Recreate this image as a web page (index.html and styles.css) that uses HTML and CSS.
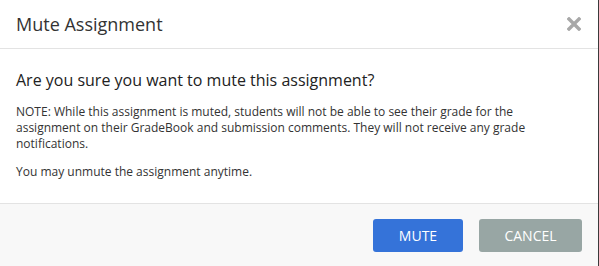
FILE: index.html
```html
<!DOCTYPE html>
<html lang="en">
<head>
    <meta charset="UTF-8">
    <title>Mute Assignment</title>
    <link rel="stylesheet" href="styles.css">
</head>
<body>

<div class="modal">
    <header class="modal-header">
        <h1>Mute Assignment</h1>
        <button class="close" aria-label="Close">
            <svg width="14" height="14" viewBox="0 0 14 14"><path d="M2 2 L12 12 M12 2 L2 12" stroke="#a8a8a8" stroke-width="3.4" stroke-linecap="square"/></svg>
        </button>
    </header>

    <section class="modal-body">
        <h2>Are you sure you want to mute this assignment?</h2>
        <p>NOTE: While this assignment is muted, students will not be able to see their grade for the assignment on their GradeBook and submission comments. They will not receive any grade notifications.</p>
        <p>You may unmute the assignment anytime.</p>
    </section>

    <footer class="modal-footer">
        <button class="btn btn-primary">MUTE</button>
        <button class="btn btn-secondary">CANCEL</button>
    </footer>
</div>

</body>
</html>
```

FILE: styles.css
```css
body {
    margin: 0;
    padding: 0;
    background: #3a3a3a;
    font-family: 'Open Sans', sans-serif;
    color: #333;
}
.modal {
    width: 598px;
    background: #fff;
    border-radius: 0 0 3px 3px;
    overflow: hidden;
}
.modal-header {
    height: 48px;
    padding: 0 16px;
    display: flex;
    align-items: center;
    justify-content: space-between;
    border-bottom: 1px solid #e3e3e3;
}
.modal-header h1 {
    margin: 0;
    font-size: 18px;
    font-weight: normal;
    color: #333;
}
.close {
    background: none;
    border: none;
    padding: 0;
    width: 14px;
    height: 14px;
    margin-right: 1px;
    cursor: pointer;
}
.close svg {
    display: block;
}
.modal-body {
    padding: 20px 16px 16px;
    height: 118px;
}
.modal-body h2 {
    margin: 0 0 13px;
    font-size: 16px;
    font-weight: normal;
    color: #222;
}
.modal-body p {
    margin: 0 0 12px;
    max-width: 540px;
    font-size: 12px;
    line-height: 16px;
    color: #333;
}
.modal-footer {
    background: #f8f8f8;
    border-top: 1px solid #e3e3e3;
    padding: 15px 16px 16px;
    height: 33px;
    display: flex;
    justify-content: flex-end;
    gap: 16px;
}
.btn {
    font-family: 'Open Sans', sans-serif;
    font-size: 14px;
    color: #fff;
    border: none;
    border-radius: 3px;
    height: 33px;
    cursor: pointer;
}
.btn-primary {
    background: #3573d9;
    width: 90px;
}
.btn-secondary {
    background: #98a6a4;
    width: 103px;
}
```
